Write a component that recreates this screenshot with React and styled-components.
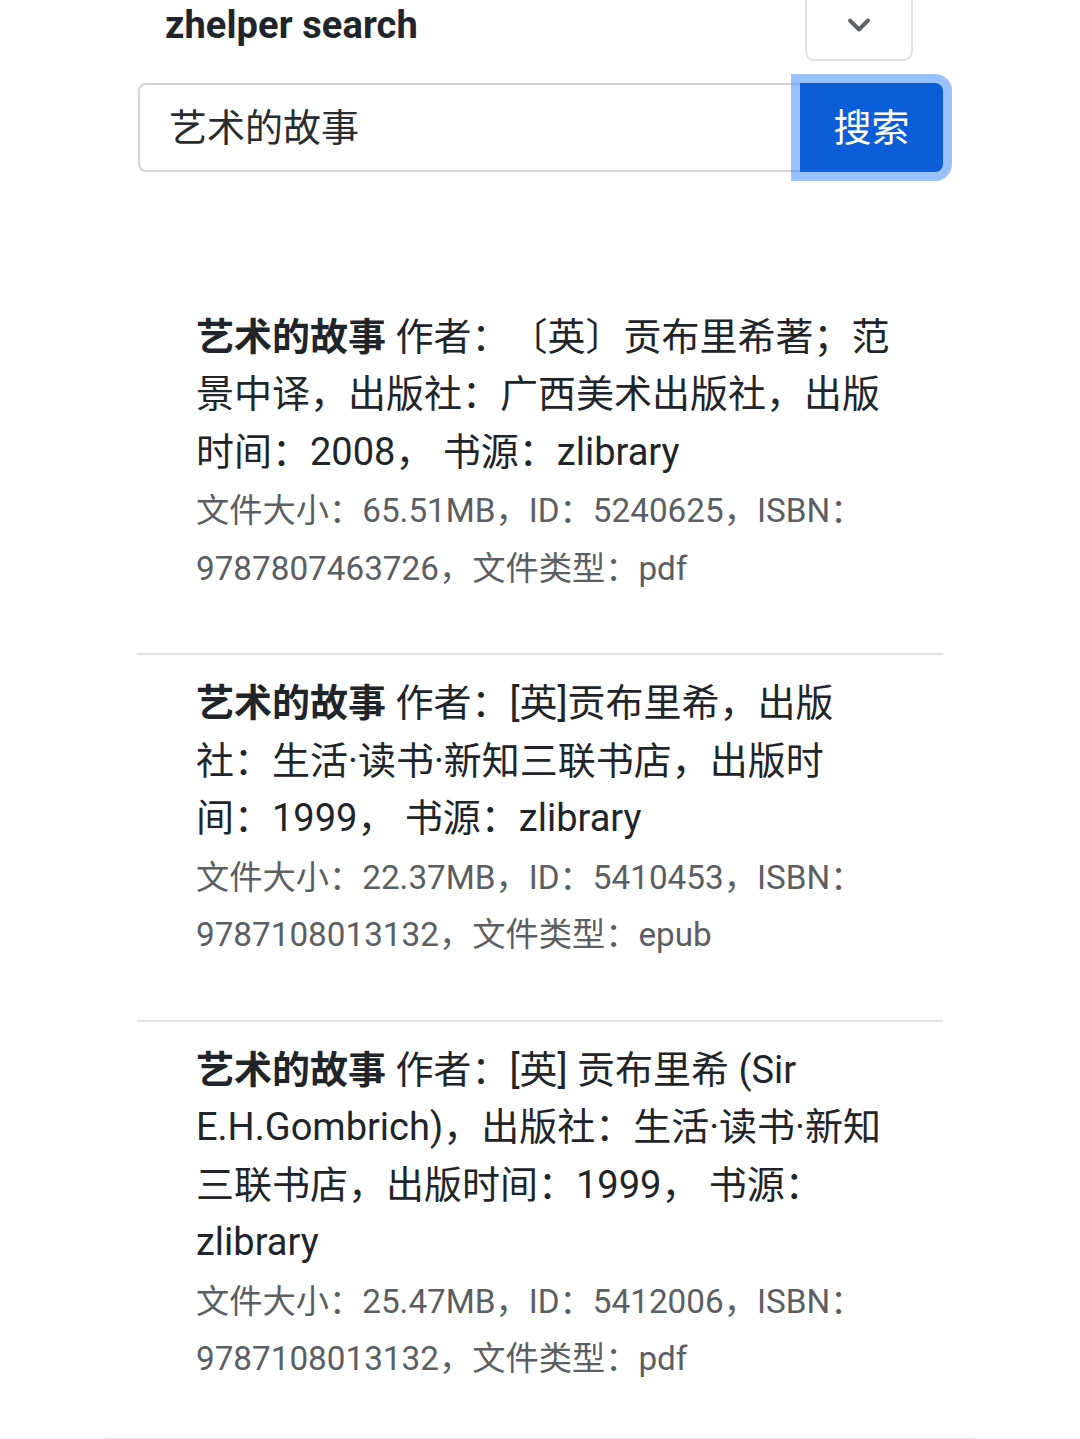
import React from "react";
import styled, { createGlobalStyle } from "styled-components";
import { ChevronDown } from "lucide-react";

const GlobalStyle = createGlobalStyle`
  html, body {
    margin: 0;
    padding: 0;
    background: #ffffff;
  }
  body {
    font-family: Roboto, "Noto Sans CJK SC", "Noto Sans", sans-serif;
    color: #212529;
    overflow: hidden;
    text-spacing-trim: space-all;
  }
  * { box-sizing: border-box; }
`;

const Page = styled.div`
  width: 100%;
  height: 1439px;
  overflow: hidden;
`;

const Container = styled.div`
  width: 806px;
  margin: 0 auto;
`;

const Header = styled.header`
  display: flex;
  justify-content: space-between;
  align-items: flex-start;
  margin-top: -32px;
`;

const Brand = styled.h1`
  margin: 29px 0 0 28px;
  font-size: 38px;
  line-height: 57px;
  font-weight: 700;
  color: #212529;
  letter-spacing: 0.1px;
`;

const MenuToggle = styled.button`
  width: 108px;
  height: 93px;
  margin-right: 30px;
  padding: 20px 0 0;
  display: flex;
  align-items: center;
  justify-content: center;
  background: #ffffff;
  border: 2px solid #e0e0e0;
  border-radius: 9px;
  color: #5f6266;
`;

const SearchRow = styled.form`
  display: flex;
  margin-top: 22px;
  height: 89px;
`;

const SearchInput = styled.input`
  flex: 1;
  min-width: 0;
  height: 100%;
  margin-left: 1px;
  padding: 0 30px 6px 29px;
  border: 2px solid #d4d6d8;
  border-right: none;
  border-radius: 8px 0 0 8px;
  font-family: Roboto, "Noto Sans CJK SC", sans-serif;
  font-size: 38px;
  color: #2a2d30;
  outline: none;
  background: #ffffff;
`;

const SearchButton = styled.button`
  position: relative;
  z-index: 1;
  width: 143px;
  height: 100%;
  padding: 0 0 6px;
  border: none;
  border-radius: 0 8px 8px 0;
  background: #0b5ed7;
  color: #ffffff;
  font-family: Roboto, "Noto Sans CJK SC", sans-serif;
  font-size: 38px;
  box-shadow: 0 0 0 9px rgba(49, 132, 253, 0.5);
`;

const Results = styled.ul`
  list-style: none;
  margin: 116.5px 0 0;
  padding: 0;
`;

const Item = styled.li`
  padding: 20px 45px 56px 59px;
  line-height: 57.5px;

  & + & {
    border-top: 2px solid #e3e3e3;
  }
  &:last-child {
    padding-bottom: 50px;
  }
`;

const Title = styled.div`
  font-size: 38px;
  color: #212529;
`;

const BookName = styled.strong`
  font-weight: 600;
`;

const Meta = styled.div`
  font-size: 33.25px;
  color: #5b5e62;
  margin-top: 1px;
`;

const FooterRule = styled.div`
  width: 870px;
  margin: 0 auto;
  border-top: 2px solid #e6e6e6;
`;

const results = [
  {
    info: "作者：〔英〕贡布里希著；范景中译，出版社：广西美术出版社，出版时间：2008， 书源：zlibrary",
    meta: "文件大小：65.51MB，ID：5240625，ISBN：9787807463726，文件类型：pdf",
  },
  {
    info: "作者：[英]贡布里希，出版社：生活·读书·新知三联书店，出版时间：1999， 书源：zlibrary",
    meta: "文件大小：22.37MB，ID：5410453，ISBN：9787108013132，文件类型：epub",
  },
  {
    info: "作者：[英] 贡布里希 (Sir E.H.Gombrich)，出版社：生活·读书·新知三联书店，出版时间：1999， 书源：zlibrary",
    meta: "文件大小：25.47MB，ID：5412006，ISBN：9787108013132，文件类型：pdf",
  },
];

export default function App() {
  return (
    <Page>
      <GlobalStyle />
      <Container>
        <Header>
          <Brand>zhelper search</Brand>
          <MenuToggle type="button" aria-label="menu">
            <ChevronDown size={36} strokeWidth={2.6} />
          </MenuToggle>
        </Header>
        <SearchRow onSubmit={(e) => e.preventDefault()}>
          <SearchInput defaultValue="艺术的故事" />
          <SearchButton type="submit">搜索</SearchButton>
        </SearchRow>
        <Results>
          {results.map((r, i) => (
            <Item key={i}>
              <Title>
                <BookName>艺术的故事</BookName> {r.info}
              </Title>
              <Meta>{r.meta}</Meta>
            </Item>
          ))}
        </Results>
      </Container>
      <FooterRule />
    </Page>
  );
}
